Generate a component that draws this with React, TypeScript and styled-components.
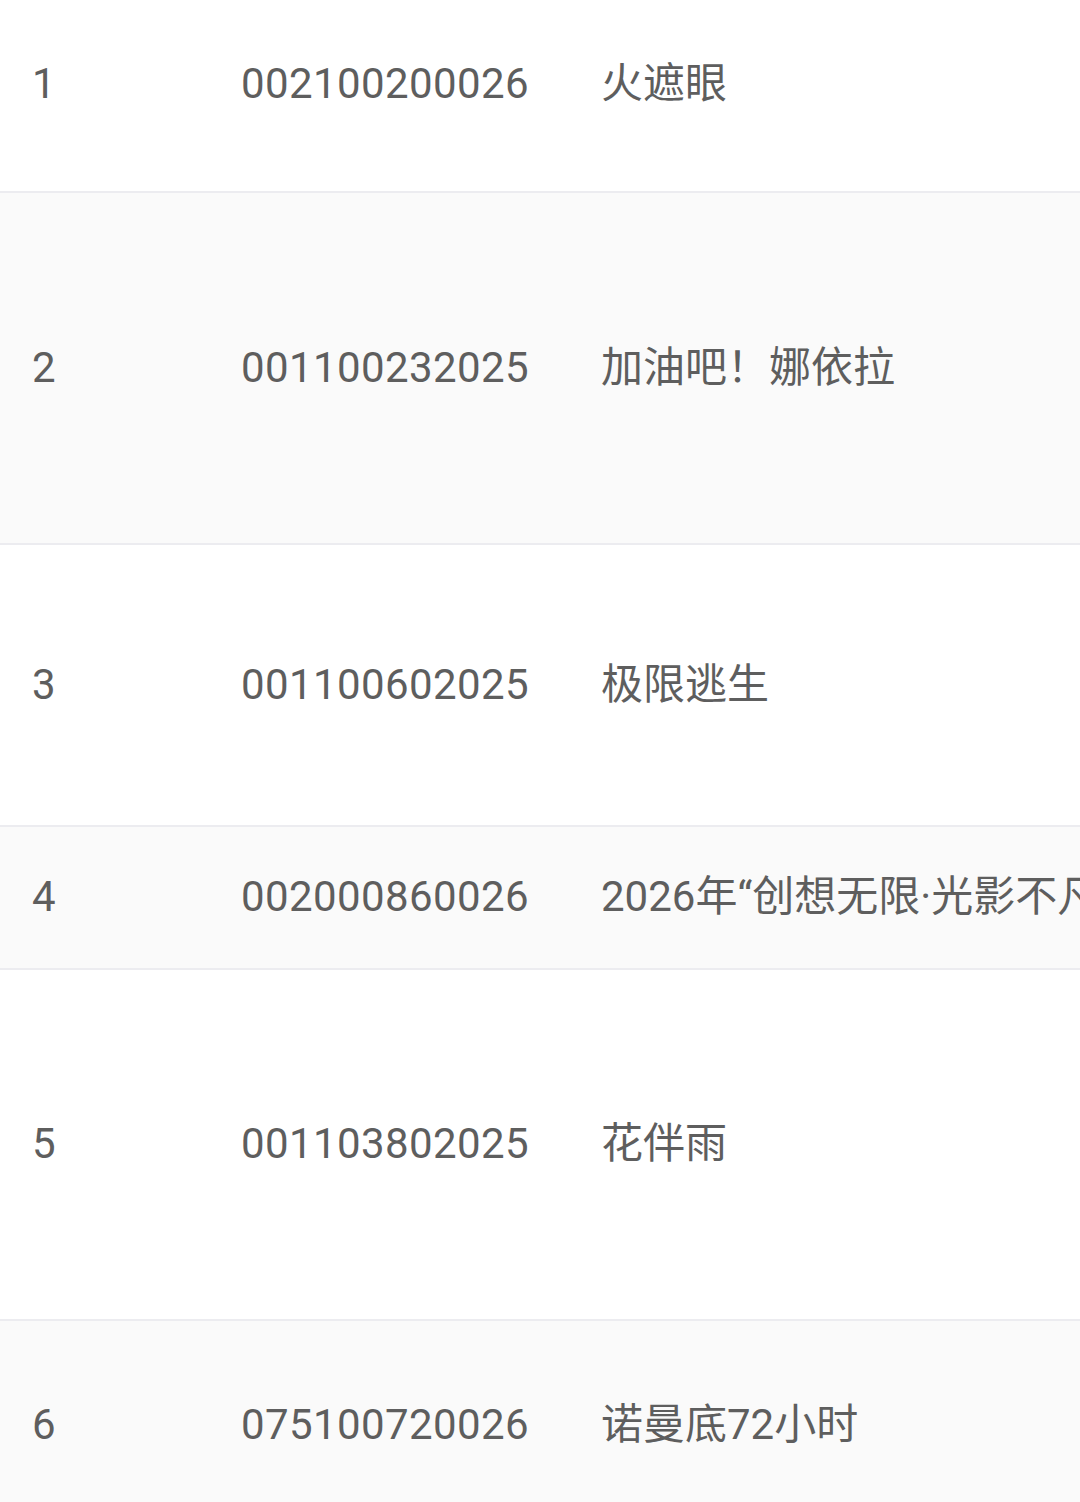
import React from 'react';
import styled, { createGlobalStyle } from 'styled-components';

const GlobalStyle = createGlobalStyle`
  html, body {
    margin: 0;
    padding: 0;
    background: #ffffff;
    overflow: hidden;
  }
  body {
    font-family: Roboto, "Noto Sans CJK SC", sans-serif;
  }
`;

const Table = styled.div`
  width: 1080px;
  height: 1502px;
  overflow: hidden;
  display: flex;
  flex-direction: column;
`;

// the list is scrolled a little, so the first row starts above the top edge
const Body = styled.div`
  margin-top: -22px;
  display: flex;
  flex-direction: column;
`;

const Row = styled.div<{ $height: number; $striped: boolean }>`
  flex: none;
  box-sizing: border-box;
  height: ${({ $height }) => $height}px;
  display: grid;
  grid-template-columns: 209px 360px minmax(0, 1fr);
  align-items: center;
  padding-left: 32px;
  background: ${({ $striped }) => ($striped ? '#fafafa' : '#ffffff')};
  border-bottom: 2px solid #ececf0;
  color: #5e5e5e;
  font-size: 42px;
  line-height: 1.3;
  white-space: nowrap;
  overflow: hidden;
`;

const Cell = styled.span`
  font-family: Roboto, "Noto Sans CJK SC", sans-serif;
`;

const Code = styled(Cell)`
  letter-spacing: 0.4px;
`;

const Name = styled(Cell)`
  overflow: hidden;
`;

const rows = [
  { no: '1', code: '002100200026', name: '火遮眼', height: 215 },
  { no: '2', code: '001100232025', name: '加油吧！娜依拉', height: 352 },
  { no: '3', code: '001100602025', name: '极限逃生', height: 282 },
  { no: '4', code: '002000860026', name: '2026年“创想无限·光影不凡”', height: 143 },
  { no: '5', code: '001103802025', name: '花伴雨', height: 351 },
  { no: '6', code: '075100720026', name: '诺曼底72小时', height: 210 },
];

const App: React.FC = () => (
  <>
    <GlobalStyle />
    <Table>
      <Body>
        {rows.map((r, i) => (
          <Row key={r.no} $height={r.height} $striped={i % 2 === 1}>
            <Cell>{r.no}</Cell>
            <Code>{r.code}</Code>
            <Name>{r.name}</Name>
          </Row>
        ))}
      </Body>
    </Table>
  </>
);

export default App;
